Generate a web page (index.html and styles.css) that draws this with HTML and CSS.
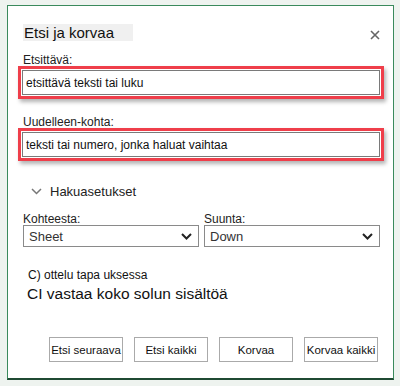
FILE: index.html
```html
<!DOCTYPE html>
<html lang="fi">
<head>
    <meta charset="UTF-8">
    <meta name="viewport" content="width=device-width, initial-scale=1.0">
    <title>Etsi ja korvaa</title>
    <link rel="stylesheet" href="styles.css">
</head>
<body>
    <div class="dialog">
        <div class="title-row">
            <h2 class="title">Etsi ja korvaa</h2>
            <span class="close">
                <svg width="10" height="10" viewBox="0 0 10 10"><path d="M1 1L9 9M9 1L1 9" stroke="#666" stroke-width="1.6"/></svg>
            </span>
        </div>

        <div class="field">
            <label for="find">Etsittävä:</label>
            <div class="highlight">
                <input type="text" id="find" value="etsittävä teksti tai luku">
            </div>
        </div>

        <div class="field">
            <label for="replace">Uudelleen-kohta:</label>
            <div class="highlight">
                <input type="text" id="replace" value="teksti tai numero, jonka haluat vaihtaa">
            </div>
        </div>

        <div class="options-toggle">
            <svg width="11" height="7" viewBox="0 0 11 7"><path d="M1 1L5.5 5.5L10 1" fill="none" stroke="#777" stroke-width="1.5"/></svg>
            <span>Hakuasetukset</span>
        </div>

        <div class="selects">
            <div class="select-group">
                <label>Kohteesta:</label>
                <div class="select">
                    <span>Sheet</span>
                    <svg width="11" height="7" viewBox="0 0 11 7"><path d="M1 1L5.5 5.5L10 1" fill="none" stroke="#222" stroke-width="2"/></svg>
                </div>
            </div>
            <div class="select-group">
                <label>Suunta:</label>
                <div class="select">
                    <span>Down</span>
                    <svg width="11" height="7" viewBox="0 0 11 7"><path d="M1 1L5.5 5.5L10 1" fill="none" stroke="#222" stroke-width="2"/></svg>
                </div>
            </div>
        </div>

        <p class="match-case">C) ottelu tapa uksessa</p>
        <p class="match-whole">CI vastaa koko solun sisältöä</p>

        <div class="buttons">
            <button>Etsi seuraava</button>
            <button>Etsi kaikki</button>
            <button>Korvaa</button>
            <button>Korvaa kaikki</button>
        </div>
    </div>
</body>
</html>
```

FILE: styles.css
```css
* {
    margin: 0;
    padding: 0;
    box-sizing: border-box;
}

body {
    font-family: "Liberation Sans", Arial, sans-serif;
    background: #eef3ef;
    width: 400px;
    height: 386px;
    padding: 5px 6px 5px 7px;
}

.dialog {
    background: white;
    border: 1px solid #3a8a5c;
    border-bottom: 2px solid #1f4a33;
    height: 375px;
    padding: 18px 15px 0 14px;
    color: #111;
}

.title-row {
    display: flex;
    justify-content: space-between;
    align-items: flex-start;
    height: 30px;
}

.title {
    font-size: 15px;
    line-height: 17px;
    font-weight: normal;
    background: #f0f0f0;
    width: 110px;
    padding-left: 1px;
    margin-left: 1px;
}

.close {
    margin-top: 2px;
    margin-right: -2px;
}

.field {
    margin-bottom: 17px;
}

.field label {
    display: block;
    font-size: 12px;
    line-height: 12px;
    height: 12px;
    color: #222;
    margin-left: 1px;
}

.highlight {
    border: 3px solid #ef3e4a;
    padding: 1px;
    margin-left: -4px;
    width: 366px;
    box-shadow: 2px 3px 4px rgba(0, 0, 0, 0.3);
}

.highlight input {
    display: block;
    width: 100%;
    height: 25px;
    border: 1px solid #7a7a7a;
    font-family: inherit;
    font-size: 12px;
    padding: 0 3px;
    color: #111;
    outline: none;
}

.options-toggle {
    display: flex;
    align-items: center;
    gap: 8px;
    height: 16px;
    margin: 22px 0 0 9px;
    font-size: 13px;
    color: #222;
}

.selects {
    display: flex;
    gap: 5px;
    margin-top: 14px;
    margin-left: 1px;
}

.select-group label {
    display: block;
    font-size: 12px;
    line-height: 12px;
    height: 12px;
    color: #222;
}

.select {
    width: 176px;
    height: 22px;
    border: 1px solid #8a8a8a;
    display: flex;
    justify-content: space-between;
    align-items: center;
    padding: 0 6px 0 5px;
    font-size: 13px;
    color: #333;
}

.match-case {
    font-size: 12px;
    line-height: 14px;
    margin: 21px 0 0 6px;
}

.match-whole {
    font-size: 15.5px;
    line-height: 18px;
    margin: 3px 0 0 5px;
}

.buttons {
    display: flex;
    gap: 11px;
    margin: 34px 0 0 27px;
}

.buttons button {
    width: 74px;
    height: 25px;
    background: white;
    border: 1px solid #aaa;
    font-family: inherit;
    font-size: 11.5px;
    padding: 0;
    white-space: nowrap;
    color: #111;
}
```
